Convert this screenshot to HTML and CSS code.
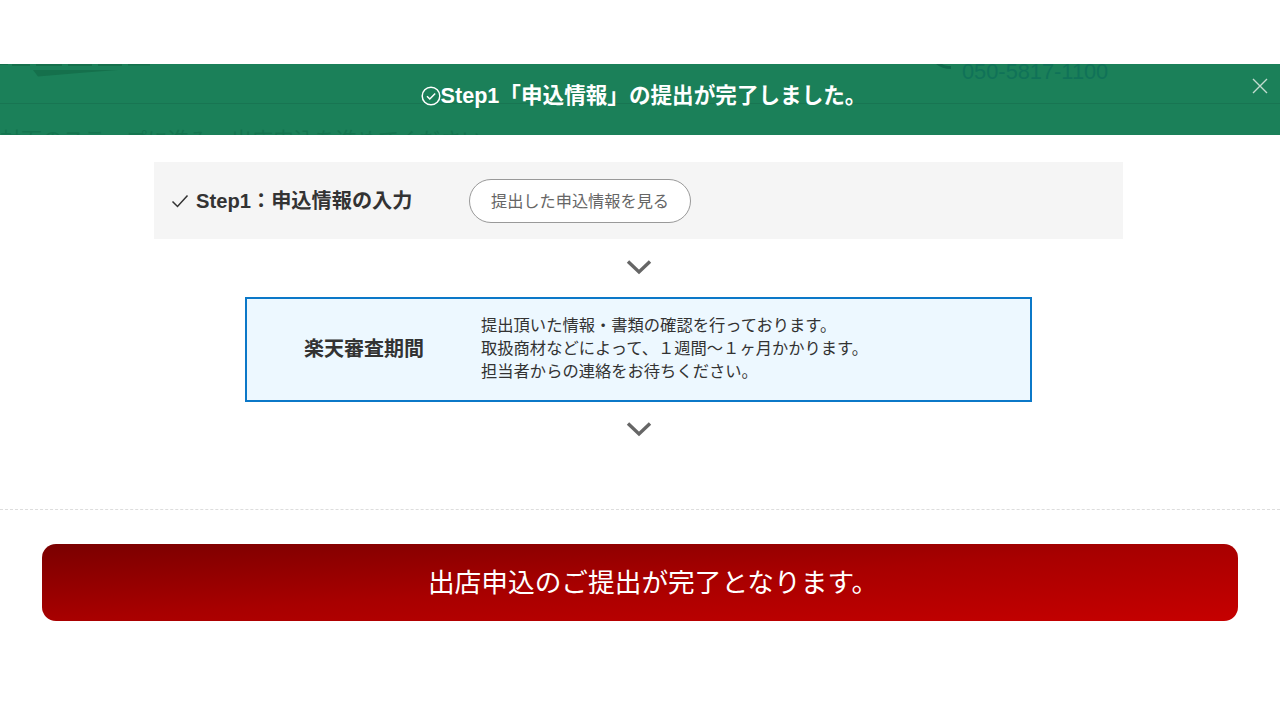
FILE: index.html
```html
<!DOCTYPE html>
<html lang="ja">
<head>
<meta charset="utf-8">
<title>出店申込</title>
<link rel="stylesheet" href="styles.css">
</head>
<body>
<div class="top-gap"></div>
<section class="notice">
  <svg class="ghost-logo" width="152" height="13" viewBox="0 0 152 13"><path class="ghost-logo-text" d="M0 0H8V1H0ZM12 0H30V2H12ZM36 0H62V2H36ZM68 0H92V2H68ZM98 0H122V2H98ZM128 0H150V1.500H128Z"/><path d="M33 6H118L85 8.500L38 12.500Z"/></svg>
  <svg class="ghost-handset" width="16" height="6" viewBox="0 0 16 6"><path d="M0 0H6Q9 2 15 2V5Q6 5 0 0Z"/></svg>
  <div class="ghost-phone">050-5817-1100</div>
  <div class="ghost-line"></div>
  <div class="ghost-lead">対面のステップに進み、出店申込を進めてください</div>
  <p class="notice-text"><svg class="notice-icon" width="20" height="20" viewBox="0 0 20 20"><circle cx="10" cy="10" r="8.800"/><path d="M6 10.200l2.800 2.800L14.200 7.400"/></svg>Step1「申込情報」の提出が完了しました。</p>
  <svg class="notice-close" width="16" height="16" viewBox="0 0 16 16"><path d="M1 1L15 15M15 1L1 15"/></svg>
</section>
<main class="content">
  <div class="step">
    <svg class="step-check" width="18" height="14" viewBox="0 0 18 14"><path d="M1.500 7.500L6.500 12.500L16.500 1.500"/></svg>
    <h2 class="step-title">Step1：申込情報の入力</h2>
    <a class="step-button">提出した申込情報を見る</a>
  </div>
  <svg class="chevron chevron-first" width="26" height="16" viewBox="0 0 26 16"><path d="M2 2.500L13 13L24 2.500"/></svg>
  <div class="review">
    <h3 class="review-title">楽天審査期間</h3>
    <p class="review-text">提出頂いた情報・書類の確認を行っております。<br>取扱商材などによって、１週間～１ヶ月かかります。<br>担当者からの連絡をお待ちください。</p>
  </div>
  <svg class="chevron chevron-last" width="26" height="16" viewBox="0 0 26 16"><path d="M2 2.500L13 13L24 2.500"/></svg>
</main>
<div class="divider"></div>
<div class="cta-wrap"><div class="cta">出店申込のご提出が完了となります。</div></div>
</body>
</html>
```
FILE: styles.css
```css
* { box-sizing: border-box; }
html, body { margin: 0; padding: 0; }
body {
  background: #fff;
  color: #333;
  font-family: "Liberation Sans", "Noto Sans CJK JP", sans-serif;
  height: 720px;
  overflow: hidden;
}
.top-gap { height: 64px; }
.notice {
  position: relative;
  height: 71px;
  background: #1b8059;
  overflow: hidden;
  display: flex;
  align-items: center;
  justify-content: center;
}
.notice-text {
  position: relative;
  margin: 0;
  color: #fff;
  font-size: 21.600px;
  font-weight: 700;
  line-height: 24px;
  display: flex;
  align-items: center;
  left: 3.500px;
  top: -4px;
}
.notice-icon { fill: none; stroke: #fff; stroke-width: 1.500; }
.notice-close {
  position: absolute;
  right: 12px;
  top: 14px;
  fill: none;
  stroke: #c3dbd0;
  stroke-width: 1.400;
}
.ghost-logo { position: absolute; left: 0; top: 0; fill: #15704c; }
.ghost-handset { position: absolute; left: 936px; top: 0; fill: #0f6a4c; }
.ghost-phone {
  position: absolute;
  left: 962px;
  top: -5px;
  font-size: 21.800px;
  line-height: 25px;
  color: #107258;
}
.ghost-line {
  position: absolute;
  left: 0;
  right: 0;
  top: 38.500px;
  height: 1.500px;
  background: #187552;
}
.ghost-lead {
  position: absolute;
  left: 0;
  top: 63px;
  font-size: 21px;
  line-height: 26px;
  white-space: nowrap;
  color: #14744f;
}
.content {
  display: flex;
  flex-direction: column;
  align-items: center;
  padding-top: 27px;
}
.step {
  width: 969px;
  height: 77px;
  margin-left: -3px;
  background: #f5f5f5;
  display: flex;
  align-items: center;
  padding-left: 17px;
}
.step-check { fill: none; stroke: #333; stroke-width: 1.500; margin-right: 7px; }
.step-title {
  margin: 0;
  width: 273px;
  font-size: 20.200px;
  line-height: 24px;
  font-weight: 700;
  color: #333;
}
.step-button {
  width: 222px;
  height: 44px;
  border: 1px solid #999;
  border-radius: 22px;
  background: #fff;
  color: #666;
  font-size: 16.200px;
  padding-bottom: 2px;
  display: flex;
  align-items: center;
  justify-content: center;
}
.chevron {
  display: block;
  margin: 19px 0 0 -2px;
  fill: none;
  stroke: #666;
  stroke-width: 3.400;
}
.chevron-first { margin: 20px 0 22px -2px; }
.review {
  width: 787px;
  height: 105px;
  margin-left: -3px;
  padding-bottom: 2px;
  border: 2px solid #0b78c8;
  background: #edf8ff;
  display: flex;
  align-items: center;
}
.review-title {
  margin: 0;
  width: 234px;
  padding-left: 57px;
  font-size: 20px;
  line-height: 24px;
  font-weight: 700;
  color: #333;
}
.review-text {
  margin: 0;
  font-size: 16.300px;
  line-height: 23px;
  color: #333;
}
.divider {
  margin-top: 72px;
  border-top: 1px dashed #ddd;
}
.cta-wrap { padding: 34px 42px 0; }
.cta {
  height: 77px;
  border-radius: 14px;
  background: linear-gradient(to bottom right, #7a0000 0%, #a80000 50%, #c60000 100%);
  color: #fff;
  font-size: 26.700px;
  line-height: 32px;
  padding: 0 0 0 26px;
  display: flex;
  align-items: center;
  justify-content: center;
}
```
